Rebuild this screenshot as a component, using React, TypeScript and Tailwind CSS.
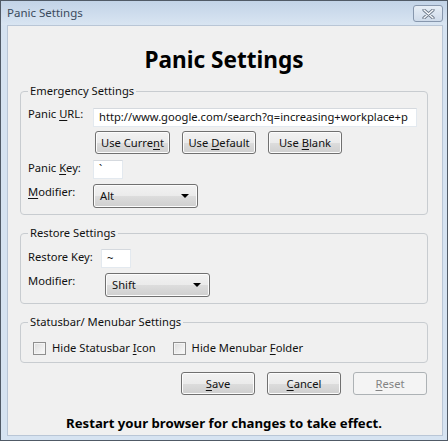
import React from 'react';

const FONT = { fontFamily: '"Noto Sans", "Open Sans", sans-serif' };

// Win7-style push button
const WinButton = ({ children, disabled = false, className = '' }: { children: React.ReactNode; disabled?: boolean; className?: string }) => (
  <button
    disabled={disabled}
    className={
      'h-[23px] w-[74px] rounded-[3px] border text-[11.2px] leading-none flex items-center justify-center ' +
      (disabled
        ? 'border-[#adb2b5] bg-[#f4f4f4] text-[#838383] '
        : 'border-[#707070] bg-[linear-gradient(to_bottom,#f2f2f2_0%,#ebebeb_50%,#dddddd_50%,#cfcfcf_100%)] text-[#111] shadow-[inset_0_0_0_1px_#fcfcfc] ') +
      className
    }
  >
    <span>{children}</span>
  </button>
);

const Select = ({ value, className = '' }: { value: string; className?: string }) => (
  <div
    className={
      'h-[24px] w-[105px] rounded-[3px] border border-[#707070] bg-[linear-gradient(to_bottom,#f2f2f2_0%,#ebebeb_50%,#dddddd_50%,#cfcfcf_100%)] shadow-[inset_0_0_0_1px_#fcfcfc] flex items-center justify-between pl-[6px] pr-[8px] text-[11.2px] text-[#111] ' +
      className
    }
  >
    <span>{value}</span>
    <svg width="8" height="4" viewBox="0 0 8 4">
      <path d="M0 0 H8 L4 4 Z" fill="#000" />
    </svg>
  </div>
);

const TextBox = ({ value, className = '' }: { value: string; className?: string }) => (
  <div
    className={
      'h-[19px] bg-white border border-[#e3e9ef] border-t-[#d5d9de] flex items-center px-[5px] text-[11.2px] text-[#111] overflow-hidden whitespace-nowrap ' +
      className
    }
  >
    {value}
  </div>
);

const CheckBox = ({ label }: { label: React.ReactNode }) => (
  <label className="flex items-center gap-[6px] text-[11.2px] leading-[16px] text-[#111]">
    <span className="w-[13px] h-[13px] border border-[#8f8f8f] bg-[linear-gradient(135deg,#dcdcdc,#fbfbfb)] shadow-[inset_0_0_0_1px_#f4f4f4]" />
    <span>{label}</span>
  </label>
);

const Group = ({ title, children, className = '' }: { title: string; children: React.ReactNode; className?: string }) => (
  <fieldset className={'border border-[#c8ccd0] rounded-[4px] px-[7px] ' + className}>
    <legend className="px-[2px] text-[11.2px] leading-[16px] text-[#111]">{title}</legend>
    {children}
  </fieldset>
);

const U = ({ children }: { children: React.ReactNode }) => <span className="underline underline-offset-2">{children}</span>;

export default function App() {
  return (
    <div className="w-[448px] h-[441px] border border-[#505a66] bg-[#d6e3f1] flex flex-col" style={FONT}>
      {/* title bar */}
      <div className="h-[24px] shrink-0 bg-[linear-gradient(to_bottom,#c2d3e7,#d9e5f2)] flex items-center justify-between pl-[6px] pr-[4px]">
        <span className="text-[11.5px] text-[#3a4a5c]">Panic Settings</span>
        <div className="w-[30px] h-[17px] mt-[1px] rounded-[3px] border border-[#8797ad] bg-[linear-gradient(to_bottom,#e7eef6,#cfdbea)] flex items-center justify-center">
          <svg width="13" height="10" viewBox="0 0 13 10">
            <path d="M2 1 L11 9 M11 1 L2 9" stroke="#6b7888" strokeWidth="3.2" strokeLinecap="round" />
            <path d="M2 1 L11 9 M11 1 L2 9" stroke="#f6f8fb" strokeWidth="1.4" strokeLinecap="round" />
          </svg>
        </div>
      </div>

      {/* client area */}
      <div className="flex-1 ml-[6px] mr-[4px] mb-[4px] bg-[#f0f0f0] border border-[#b9c6d6] flex flex-col pl-[12px] pr-[14px]">
        <h1 className="text-center text-[22.6px] font-bold leading-[28px] text-black mt-[20px]">Panic Settings</h1>

        <Group title="Emergency Settings" className="mt-[9px] pb-[6px]">
          <div className="flex items-start mt-[9px]">
            <span className="w-[65px] text-[11.2px] leading-[16px] -mt-[2px] text-[#111]">
              Panic <U>U</U>RL:
            </span>
            <TextBox value="http://www.google.com/search?q=increasing+workplace+p" className="w-[324px]" />
          </div>
          <div className="flex gap-[12px] ml-[67px] mt-[4px]">
            <WinButton className="w-[75px]">
              Use Curre<U>n</U>t
            </WinButton>
            <WinButton>
              Use <U>D</U>efault
            </WinButton>
            <WinButton className="w-[73px]">
              Use <U>B</U>lank
            </WinButton>
          </div>
          <div className="flex items-start mt-[6px]">
            <span className="w-[65px] text-[11.2px] leading-[16px] text-[#111]">
              Panic <U>K</U>ey:
            </span>
            <TextBox value="`" className="w-[30px]" />
          </div>
          <div className="flex items-start mt-[5px]">
            <span className="w-[65px] text-[11.2px] leading-[16px] text-[#111]">
              <U>M</U>odifier:
            </span>
            <Select value="Alt" />
          </div>
        </Group>

        <Group title="Restore Settings" className="mt-[10px] pb-[6px]">
          <div className="flex items-start mt-[8px]">
            <span className="w-[73px] text-[11.2px] leading-[16px] text-[#111]">Restore Key:</span>
            <TextBox value="~" className="w-[30px]" />
          </div>
          <div className="flex items-start mt-[5px]">
            <span className="w-[77px] text-[11.2px] leading-[16px] text-[#111]">Modifier:</span>
            <Select value="Shift" />
          </div>
        </Group>

        <Group title="Statusbar/ Menubar Settings" className="mt-[10px] pb-[6px]">
          <div className="flex items-center gap-[17px] mt-[10px] pl-[5px]">
            <CheckBox label={<>Hide Statusbar <U>I</U>con</>} />
            <CheckBox label={<>Hide Menubar <U>F</U>older</>} />
          </div>
        </Group>

        <div className="flex justify-end gap-[12px] mt-[9px] mr-[1px]">
          <WinButton>
            <U>S</U>ave
          </WinButton>
          <WinButton className="w-[73px]">
            <U>C</U>ancel
          </WinButton>
          <WinButton disabled>
            <U>R</U>eset
          </WinButton>
        </div>

        <p className="text-center text-[13.2px] font-bold leading-[18px] text-black mt-[19px]">Restart your browser for changes to take effect.</p>
      </div>
    </div>
  );
}
